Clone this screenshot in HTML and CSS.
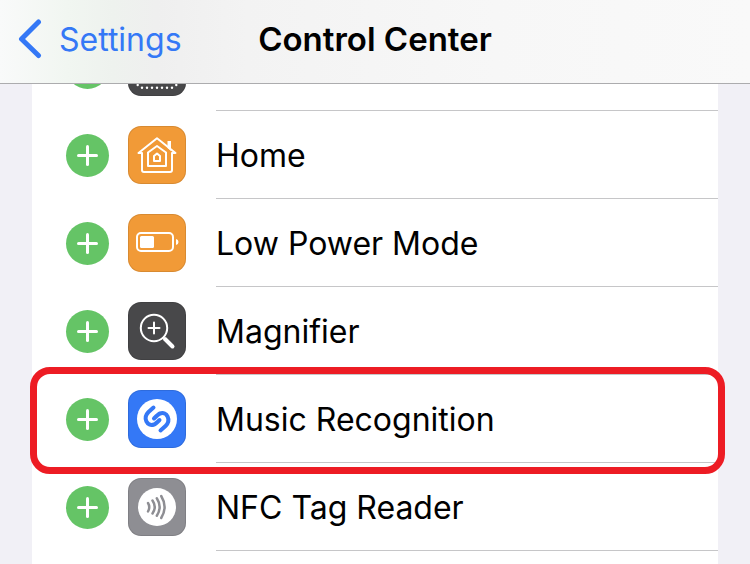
FILE: index.html
```
<!DOCTYPE html>
<html lang="en">
<head>
<meta charset="utf-8">
<meta name="viewport" content="width=device-width, initial-scale=1">
<title>Control Center</title>
<link rel="stylesheet" href="styles.css">
</head>
<body>
<header class="navbar">
    <a href="#" class="back">
        <svg class="chevron" width="24" height="40" viewBox="0 0 24 40">
            <path d="M20.500 3 L3.500 20 L20.500 36.500"/>
        </svg>
        Settings
    </a>
    <h1 class="title">Control Center</h1>
</header>
<ul class="list">
    <li class="row">
        <button class="add" aria-label="Add"></button>
        <svg class="icon dark" viewBox="0 0 58 58">
            <g class="solid">
                <circle cx="9.700" cy="47" r="1.200"/>
                <circle cx="14" cy="49.700" r="1.200"/>
                <circle cx="19" cy="49.700" r="1.200"/>
                <circle cx="24" cy="49.700" r="1.200"/>
                <circle cx="29" cy="49.700" r="1.200"/>
                <circle cx="34" cy="49.700" r="1.200"/>
                <circle cx="39" cy="49.700" r="1.200"/>
                <circle cx="44" cy="49.700" r="1.200"/>
                <circle cx="48.300" cy="47" r="1.200"/>
            </g>
        </svg>
        <span class="label"></span>
    </li>
    <li class="row">
        <button class="add" aria-label="Add Home"></button>
        <svg class="icon orange" viewBox="0 0 58 58">
            <path class="solid" d="M39.500 15 h3.500 v10 l-3.500 -3 z"/>
            <path class="line" d="M10.500 27 L29 12.300 L47.500 27 H44 V44 Q44 46 42 46 H16 Q14 46 14 44 V27 Z"/>
            <path class="line" d="M20 26.500 L29 20 L38 26.500 V40 H20 Z"/>
            <path class="line" d="M26 30 L29 27.500 L32 30 V35 H26 Z"/>
        </svg>
        <span class="label">Home</span>
    </li>
    <li class="row">
        <button class="add" aria-label="Add Low Power Mode"></button>
        <svg class="icon orange" viewBox="0 0 58 58">
            <rect class="line" x="9" y="19" width="36" height="18" rx="4"/>
            <rect class="solid" x="12" y="22" width="14" height="12" rx="1.500"/>
            <path class="solid" d="M48 25 Q50.500 25.500 50.500 28 Q50.500 30.500 48 31 Z"/>
        </svg>
        <span class="label">Low Power Mode</span>
    </li>
    <li class="row">
        <button class="add" aria-label="Add Magnifier"></button>
        <svg class="icon dark" viewBox="0 0 58 58">
            <circle class="line" cx="26" cy="26" r="13.200"/>
            <path class="line" d="M26 20.500 V31.500 M20.500 26 H31.500"/>
            <path class="line handle" d="M37 37 L44.500 44.500"/>
        </svg>
        <span class="label">Magnifier</span>
    </li>
    <li class="row marked">
        <button class="add" aria-label="Add Music Recognition"></button>
        <svg class="icon blue" viewBox="0 0 58 58">
            <circle class="solid" cx="29" cy="29" r="20"/>
            <path class="hook" d="M25.500 17.500 L20.500 22 C14.500 28 19 37 26 34.500 C27.500 34 29 32.500 31.500 30"/>
            <path class="hook" d="M32.500 40.500 L37.500 36 C43.500 30 39 21 32 23.500 C30.500 24 29 25.500 26 28.500"/>
        </svg>
        <span class="label">Music Recognition</span>
    </li>
    <li class="row">
        <button class="add" aria-label="Add NFC Tag Reader"></button>
        <svg class="icon gray" viewBox="0 0 58 58">
            <circle class="solid" cx="29" cy="29" r="19"/>
            <path class="wave" d="M20 25 Q22.500 29 20 33.500 M24.500 22.500 Q29 29 24.500 35.500 M28.800 20.300 Q34.500 29 28.800 37.700 M33.200 18 Q40 29 33.200 40"/>
        </svg>
        <span class="label">NFC Tag Reader</span>
    </li>
</ul>
</body>
</html>
```
FILE: styles.css
```
* {
    box-sizing: border-box;
}
body {
    margin: 0;
    background-color: #f1f0f6;
    font-family: Inter, "Liberation Sans", sans-serif;
    color: #000;
}
.navbar {
    position: fixed;
    top: 0;
    left: 0;
    right: 0;
    z-index: 2;
    display: grid;
    grid-template-columns: 1fr auto 1fr;
    align-items: center;
    height: 84px;
    padding: 0 18px 5px;
    border-bottom: 1px solid #acacae;
    background: linear-gradient(90deg, #f9fafa 0%, #f1f6f1 9%, #eef2ee 15%, #efefef 21%, #f3f3f3 33%, #f7f7f7 66%, #f9f9f9 100%);
}
.back {
    display: flex;
    align-items: center;
    gap: 17px;
    font-size: 32px;
    color: #3478f6;
    text-decoration: none;
}
.chevron path {
    fill: none;
    stroke: #3478f6;
    stroke-width: 5;
    stroke-linecap: round;
    stroke-linejoin: round;
}
.title {
    margin: 0;
    font-size: 33px;
    font-weight: 600;
}
.list {
    list-style: none;
    margin: 23px 32px 0;
    padding: 0;
    min-height: calc(100vh - 23px);
    background-color: #fff;
}
.row {
    position: relative;
    display: flex;
    align-items: center;
    height: 88px;
    padding-left: 34px;
}
.add {
    position: relative;
    width: 43px;
    height: 43px;
    margin-right: 19px;
    padding: 0;
    border: none;
    border-radius: 50%;
    background-color: #65c466;
}
.add::before,
.add::after {
    content: "";
    position: absolute;
    inset: 20px 11px;
    border-radius: 2px;
    background-color: #fff;
}
.add::after {
    inset: 11px 20px;
}
.icon {
    width: 58px;
    height: 58px;
    margin-right: 30px;
    border-radius: 13px;
    box-shadow: inset 0 0 0 1px rgba(0, 0, 0, 0.1);
}
.orange {
    background-color: #f19a37;
}
.dark {
    background-color: #48484a;
}
.blue {
    background-color: #3478f6;
}
.gray {
    background-color: #8e8e93;
}
.solid {
    fill: #fff;
}
.line {
    fill: none;
    stroke: #fff;
    stroke-width: 2;
    stroke-linecap: round;
    stroke-linejoin: round;
}
.handle {
    stroke-width: 4;
}
.hook {
    fill: none;
    stroke: #3478f6;
    stroke-width: 4;
    stroke-linecap: round;
}
.wave {
    fill: none;
    stroke: #8e8e93;
    stroke-width: 2.500;
    stroke-linecap: round;
}
.label {
    flex: 1;
    align-self: stretch;
    display: flex;
    align-items: center;
    padding-top: 2px;
    border-bottom: 1px solid #c6c6c8;
    font-size: 32px;
}
/* red frame around the row to pick */
.marked::after {
    content: "";
    position: absolute;
    inset: -8px -7px -11px -2px;
    border: 7px solid #ed1c24;
    border-radius: 20px;
    pointer-events: none;
}
```
